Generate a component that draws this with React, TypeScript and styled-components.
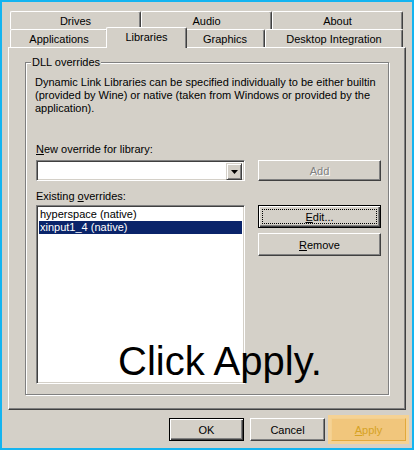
import React from "react";
import styled, { createGlobalStyle } from "styled-components";

const GlobalStyle = createGlobalStyle`
  html, body {
    margin: 0;
    padding: 0;
    background: #d4d0c8;
    overflow: hidden;
  }
  body {
    font-family: "Liberation Sans", Tahoma, Arial, sans-serif;
    font-size: 11px;
  }
`;

const Frame = styled.div`
  position: relative;
  width: 414px;
  height: 450px;
  box-sizing: border-box;
  border: 2px solid #14b4f0;
  background: #d4d0c8;
  color: #000;
  display: flex;
  flex-direction: column;
  padding: 9px 6px 0 6px;
`;

const TabRow = styled.div`
  display: flex;
  height: 18px;
  margin: 0 3px 0 2px;
`;

const Tab = styled.div<{ $w: number; $active?: boolean }>`
  position: relative;
  box-sizing: border-box;
  flex: none;
  width: ${(p) => p.$w}px;
  height: ${(p) => (p.$active ? 21 : 18)}px;
  margin: ${(p) => (p.$active ? "-2px -2px 0 -2px" : "0")};
  z-index: ${(p) => (p.$active ? 2 : 1)};
  display: flex;
  align-items: center;
  justify-content: center;
  padding-bottom: ${(p) => (p.$active ? 2 : 0)}px;
  background: #d4d0c8;
  border-top: 1px solid #fff;
  border-left: 1px solid #fff;
  border-right: 1px solid #404040;
  border-radius: 2px 2px 0 0;
  box-shadow: inset -1px 0 0 #808080;
  white-space: nowrap;
`;

const Panel = styled.div`
  position: relative;
  z-index: 1;
  box-sizing: border-box;
  height: 363px;
  border-top: 1px solid #fff;
  border-left: 1px solid #fff;
  border-right: 1px solid #404040;
  border-bottom: 1px solid #404040;
  box-shadow: inset -1px -1px 0 #808080;
  padding: 8px 16px 0 16px;
`;

const Group = styled.fieldset`
  margin: 0;
  min-width: 0;
  padding: 7px 10px 10px 10px;
  border: 1px solid #808080;
  box-shadow: inset 1px 1px 0 #fff, 1px 1px 0 #fff;
`;

const Legend = styled.legend`
  margin-left: -5px;
  padding: 0 1px;
  line-height: 13px;
  background: #d4d0c8;
`;

const Description = styled.p`
  margin: 0 0 0 -1px;
  line-height: 13px;
  white-space: nowrap;
`;

const Label = styled.div<{ $top: number; $bottom: number }>`
  line-height: 13px;
  margin-top: ${(p) => p.$top}px;
  margin-bottom: ${(p) => p.$bottom}px;
`;

const Row = styled.div`
  display: grid;
  grid-template-columns: 209px 123px;
  column-gap: 13px;
  align-items: start;
`;

const Sunken = styled.div`
  box-sizing: border-box;
  background: #fff;
  border: 1px solid;
  border-color: #808080 #fff #fff #808080;
  box-shadow: inset 1px 1px 0 #404040, inset -1px -1px 0 #d4d0c8;
`;

const Combo = styled(Sunken)`
  height: 21px;
  display: flex;
  justify-content: flex-end;
  padding: 2px;
`;

const DropButton = styled.div`
  box-sizing: border-box;
  width: 16px;
  height: 17px;
  background: #d4d0c8;
  border: 1px solid;
  border-color: #d4d0c8 #404040 #404040 #d4d0c8;
  box-shadow: inset 1px 1px 0 #fff, inset -1px -1px 0 #808080;
  display: flex;
  align-items: center;
  justify-content: center;
`;

const ListBox = styled(Sunken)`
  height: 179px;
  padding: 2px;
`;

const ListItem = styled.div<{ $selected?: boolean }>`
  height: 13px;
  line-height: 13px;
  padding-left: 1px;
  white-space: nowrap;
  background: ${(p) => (p.$selected ? "#0a246a" : "transparent")};
  color: ${(p) => (p.$selected ? "#fff" : "#000")};
`;

const Button = styled.div<{ $h?: number; $default?: boolean; $disabled?: boolean }>`
  position: relative;
  box-sizing: border-box;
  height: ${(p) => p.$h ?? 23}px;
  display: flex;
  align-items: center;
  justify-content: center;
  background: #d4d0c8;
  border: 1px solid;
  border-color: ${(p) => (p.$default ? "#000" : "#fff #404040 #404040 #fff")};
  box-shadow: ${(p) =>
    p.$default
      ? "inset 1px 1px 0 #fff, inset -1px -1px 0 #404040, inset -2px -2px 0 #808080"
      : "inset -1px -1px 0 #808080"};
  color: ${(p) => (p.$disabled ? "#808080" : "#000")};
  text-shadow: ${(p) => (p.$disabled ? "1px 1px 0 #fff" : "none")};
  white-space: nowrap;
`;

const FocusRing = styled.span`
  position: absolute;
  inset: 3px;
  border: 1px dotted #000;
  pointer-events: none;
`;

const SideButtons = styled.div`
  display: flex;
  flex-direction: column;
  gap: 5px;
`;

const Footer = styled.div`
  display: flex;
  justify-content: flex-end;
  gap: 6px;
  margin-top: 8px;
`;

const FooterButton = styled(Button)`
  width: 75px;
`;

const ApplyButton = styled.div`
  box-sizing: border-box;
  width: 75px;
  height: 23px;
  display: flex;
  align-items: center;
  justify-content: center;
  background: #f1c67c;
  border: 1px solid;
  border-color: #f3d08f #e2a93c #e2a93c #f3d08f;
  box-shadow: 0 0 0 3px #f5d294;
  color: #d6a224;
`;

const Caption = styled.div`
  position: absolute;
  left: 116px;
  top: 339px;
  z-index: 5;
  font-family: "Liberation Sans", Arial, sans-serif;
  font-size: 40px;
  line-height: 40px;
  color: #000;
  white-space: nowrap;
  pointer-events: none;
`;

const Arrow = () => (
  <svg width="7" height="4" viewBox="0 0 7 4">
    <polygon points="0,0 7,0 3.5,4" fill="#000" />
  </svg>
);

export default function App() {
  return (
    <>
      <GlobalStyle />
      <Frame>
        <TabRow>
          <Tab $w={131}>Drives</Tab>
          <Tab $w={131}>Audio</Tab>
          <Tab $w={131}>About</Tab>
        </TabRow>
        <TabRow>
          <Tab $w={98}>Applications</Tab>
          <Tab $w={81} $active>
            Libraries
          </Tab>
          <Tab $w={80}>Graphics</Tab>
          <Tab $w={138}>Desktop Integration</Tab>
        </TabRow>
        <Panel>
          <Group>
            <Legend>DLL overrides</Legend>
            <Description>
              Dynamic Link Libraries can be specified individually to be either builtin
              <br />
              (provided by Wine) or native (taken from Windows or provided by the
              <br />
              application).
            </Description>
            <Label $top={28} $bottom={4}>
              <u>N</u>ew override for library:
            </Label>
            <Row>
              <Combo>
                <DropButton>
                  <Arrow />
                </DropButton>
              </Combo>
              <Button $h={21} $disabled>
                Add
              </Button>
            </Row>
            <Label $top={9} $bottom={2}>
              Existing <u>o</u>verrides:
            </Label>
            <Row>
              <ListBox>
                <ListItem>hyperspace (native)</ListItem>
                <ListItem $selected>xinput1_4 (native)</ListItem>
              </ListBox>
              <SideButtons>
                <Button $default>
                  <span>
                    <u>E</u>dit...
                  </span>
                  <FocusRing />
                </Button>
                <Button>
                  <span>
                    <u>R</u>emove
                  </span>
                </Button>
              </SideButtons>
            </Row>
          </Group>
        </Panel>
        <Footer>
          <FooterButton $default>OK</FooterButton>
          <FooterButton>Cancel</FooterButton>
          <ApplyButton>
            <span>
              <u>A</u>pply
            </span>
          </ApplyButton>
        </Footer>
        <Caption>Click Apply.</Caption>
      </Frame>
    </>
  );
}
